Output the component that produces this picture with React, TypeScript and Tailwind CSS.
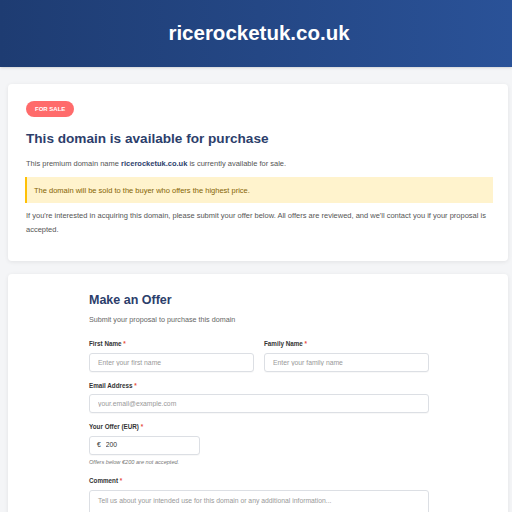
export default function App() {
  return (
    <div className="min-h-screen bg-[#f4f5f7] font-['Liberation_Sans',Arial,sans-serif]">
      <header className="flex h-[67px] items-center justify-center bg-gradient-to-r from-[#1e3c72] to-[#2a5298] pl-[6px] shadow-sm">
        <h1 className="text-[20.5px] font-bold text-white">ricerocketuk.co.uk</h1>
      </header>

      <main className="ml-2 mr-1 flex flex-col gap-[13px] pt-[17px]">
        <section className="rounded-[4px] bg-white pb-[24px] pl-[18px] pr-[15px] pt-[17px] shadow-[0_1px_4px_rgba(0,0,0,0.08)]">
          <span className="flex h-4 w-fit items-center rounded-full bg-[#ff6b6b] px-[9px] text-[6px] font-bold uppercase text-white">
            For Sale
          </span>
          <h2 className="mt-[12px] text-[13.6px] font-bold text-[#2c3e6b]">This domain is available for purchase</h2>
          <p className="mt-[9px] text-[7.5px] text-[#555]">
            This premium domain name <strong className="text-[#2c3e6b]">ricerocketuk.co.uk</strong> is currently available
            for sale.
          </p>
          <div className="-ml-px mt-[7.5px] border-l-2 border-[#ffc107] bg-[#fff3cd] py-[7.5px] pl-[7px] pr-2 text-[7.5px] text-[#856404]">
            The domain will be sold to the buyer who offers the highest price.
          </div>
          <p className="mt-[6px] text-[7.5px] leading-[14px] text-[#555]">
            If you're interested in acquiring this domain, please submit your offer below. All offers are reviewed, and
            we'll contact you if your proposal is accepted.
          </p>
        </section>

        <section className="rounded-[4px] bg-white pb-10 pt-[16.5px] shadow-[0_1px_4px_rgba(0,0,0,0.08)]">
          <div className="ml-[81px] w-[340px]">
            <h2 className="text-[12.5px] font-bold text-[#2c3e6b]">Make an Offer</h2>
            <p className="mt-[5px] text-[7.2px] text-[#666]">Submit your proposal to purchase this domain</p>

            <form className="mt-[14px] flex flex-col">
              <div className="grid grid-cols-2 gap-[10px]">
                <Field label="First Name">
                  <input className={inputCls} placeholder="Enter your first name" />
                </Field>
                <Field label="Family Name">
                  <input className={inputCls} placeholder="Enter your family name" />
                </Field>
              </div>

              <div className="mt-[9px]">
                <Field label="Email Address">
                  <input className={inputCls} placeholder="your.email@example.com" />
                </Field>
              </div>

              <div className="mt-[9px]">
                <Field label="Your Offer (EUR)">
                  <div className="flex h-[19px] w-[111px] items-center gap-[5px] rounded-[3px] border border-[#dcdfe4] bg-white px-[7px] text-[6.8px] text-[#333] shadow-[0_1px_1px_rgba(0,0,0,0.03)]">
                    <span>€</span>
                    <input className="w-full bg-transparent outline-none" defaultValue="200" />
                  </div>
                </Field>
                <p className="mt-[3px] text-[5.6px] italic text-[#777]">Offers below €200 are not accepted.</p>
              </div>

              <div className="mt-[10px]">
                <Field label="Comment">
                  <textarea
                    className="h-[60px] w-full resize-none rounded-[3px] border border-[#dcdfe4] px-[8px] py-[5px] text-[6.8px] text-[#333] outline-none placeholder:text-[#999]"
                    placeholder="Tell us about your intended use for this domain or any additional information..."
                  />
                </Field>
              </div>
            </form>
          </div>
        </section>
      </main>
    </div>
  );
}

const inputCls =
  "h-[19px] w-full rounded-[3px] border border-[#dcdfe4] bg-white px-[8px] text-[6.8px] text-[#333] outline-none shadow-[0_1px_1px_rgba(0,0,0,0.03)] placeholder:text-[#999]";

function Field({ label, children }: { label: string; children: React.ReactNode }) {
  return (
    <label className="flex flex-col gap-[4px]">
      <span className="text-[6.3px] font-bold text-[#333]">
        {label} <span className="text-[#e74c3c]">*</span>
      </span>
      {children}
    </label>
  );
}
